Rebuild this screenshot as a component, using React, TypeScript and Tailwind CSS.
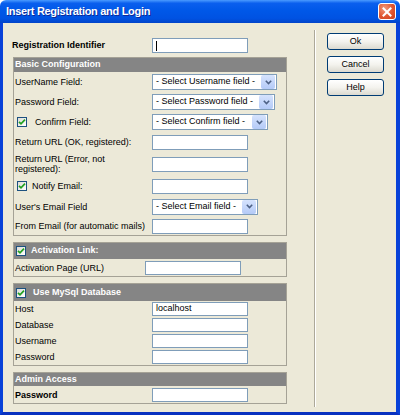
import React from 'react';

const Check: React.FC = () => (
  <div className="w-[10px] h-[10px] border border-[#1C5180] bg-gradient-to-br from-[#DCDCD7] to-white flex items-center justify-center shrink-0">
    <svg width="8" height="8" viewBox="0 0 8 8">
      <path d="M1 3.8 L3 5.8 L7 1.6" fill="none" stroke="#21A121" strokeWidth="1.7" />
    </svg>
  </div>
);

const TextBox: React.FC<{ w?: string; value?: string; caret?: boolean; h?: string }> = ({ w = 'w-[96px]', value, caret, h = 'h-[15px]' }) => (
  <div className={`${w} ${h} border border-[#7F9DB9] bg-white flex items-center px-[3px] text-black shrink-0`}>
    {caret && <div className="w-px h-[10px] bg-black" />}
    {value}
  </div>
);

const Combo: React.FC<{ w: string; label: string }> = ({ w, label }) => (
  <div className={`${w} h-[16px] border border-[#7F9DB9] bg-white flex items-center shrink-0`}>
    <div className="flex-1 pl-[3px] whitespace-nowrap overflow-hidden">{label}</div>
    <div className="w-[14px] h-[14px] mr-px bg-gradient-to-b from-[#D6E3FD] to-[#B4CAF7] rounded-[2px] flex items-center justify-center">
      <svg width="7" height="5" viewBox="0 0 7 5">
        <path d="M0.8 0.8 L3.5 3.5 L6.2 0.8" fill="none" stroke="#4D6185" strokeWidth="1.6" />
      </svg>
    </div>
  </div>
);

const Row: React.FC<{ h: string; label: React.ReactNode; lw?: string; children: React.ReactNode }> = ({ h, label, lw = 'w-[138px]', children }) => (
  <div className={`${h} flex items-center`}>
    <div className={`${lw} pl-px leading-[10px]`}>{label}</div>
    {children}
  </div>
);

const XpButton: React.FC<{ label: string }> = ({ label }) => (
  <div className="w-[57px] h-[17px] rounded-[3px] border border-[#003C74] bg-gradient-to-b from-white via-[#F4F3EE] to-[#DCDAD0] flex items-center justify-center text-black">
    {label}
  </div>
);

export default function App() {
  return (
    <div className="w-[400px] h-[415px] flex flex-col font-['Liberation_Sans',Arial,sans-serif] text-[9px] text-black bg-white">
      {/* title bar */}
      <div className="h-[23px] rounded-t-[6px] bg-[linear-gradient(to_bottom,#4a9bff_0%,#0a5fee_14%,#0058e8_45%,#0052e2_80%,#0244c9_100%)] flex items-center pl-[6px] pr-[4px]">
        <div className="flex-1 text-white font-bold text-[11px] tracking-[-0.3px] [text-shadow:1px_1px_0_#0c2a99]">Insert Registration and Login</div>
        <div className="w-[18px] h-[17px] rounded-[3px] border border-white bg-[radial-gradient(circle_at_35%_30%,#f09a7c_0%,#e0552f_55%,#c8401d_100%)] flex items-center justify-center">
          <svg width="10" height="10" viewBox="0 0 10 10">
            <path d="M1.5 1.5 L8.5 8.5 M8.5 1.5 L1.5 8.5" stroke="white" strokeWidth="2" strokeLinecap="square" />
          </svg>
        </div>
      </div>

      {/* client */}
      <div className="flex-1 flex bg-[#ECE9D8] border-l-[3px] border-r-[4px] border-b-[3px] border-l-[#0841D8] border-r-[#0841D8] border-b-[#0831C0]">
        {/* left */}
        <div className="w-[311px] pl-[10px] pt-[15px] flex flex-col">
          <div className="h-[15px] flex items-center -ml-px">
            <div className="w-[140px] font-bold">Registration Identifier</div>
            <TextBox caret />
          </div>

          {/* Basic configuration */}
          <div className="mt-[4px] w-[274px] border border-[#A5A296] flex flex-col">
            <div className="h-[14px] bg-[#858585] text-white font-bold flex items-center pl-px">Basic Configuration</div>
            <Row h="h-[20px]" label="UserName Field:"><Combo w="w-[125px]" label="- Select Username field -" /></Row>
            <Row h="h-[20px]" label="Password Field:"><Combo w="w-[123px]" label="- Select Password field -" /></Row>
            <Row h="h-[20px]" label={<div className="flex items-center pl-[2px]"><Check /><span className="ml-[8px]">Confirm Field:</span></div>}>
              <Combo w="w-[116px]" label="- Select Confirm field -" />
            </Row>
            <Row h="h-[20px]" label="Return URL (OK, registered):"><TextBox /></Row>
            <Row h="h-[24px]" label={<>Return URL (Error, not<br />registered):</>}><TextBox /></Row>
            <Row h="h-[20px]" label={<div className="flex items-center pl-[2px]"><Check /><span className="ml-[5px]">Notify Email:</span></div>}>
              <TextBox />
            </Row>
            <Row h="h-[21px]" label="User's Email Field"><Combo w="w-[106px]" label="- Select Email field -" /></Row>
            <Row h="h-[18px]" label="From Email (for automatic mails)"><TextBox /></Row>
          </div>

          {/* Activation */}
          <div className="mt-[6px] w-[274px] border border-[#A5A296] flex flex-col">
            <div className="h-[16px] bg-[#858585] text-white font-bold flex items-center pl-[2px]">
              <Check /><span className="ml-[5px]">Activation Link:</span>
            </div>
            <Row h="h-[17px]" lw="w-[131px]" label="Activation Page (URL)"><TextBox h="h-[14px]" /></Row>
          </div>

          {/* MySql */}
          <div className="mt-[6px] w-[274px] border border-[#A5A296] flex flex-col">
            <div className="h-[17px] bg-[#858585] text-white font-bold flex items-center pl-[2px]">
              <Check /><span className="ml-[7px]">Use MySql Database</span>
            </div>
            <Row h="h-[16px]" label="Host"><TextBox h="h-[14px]" value="localhost" /></Row>
            <Row h="h-[16px]" label="Database"><TextBox h="h-[14px]" /></Row>
            <Row h="h-[16px]" label="Username"><TextBox h="h-[14px]" /></Row>
            <Row h="h-[16px]" label="Password"><TextBox h="h-[14px]" /></Row>
          </div>

          {/* Admin */}
          <div className="mt-[6px] w-[274px] border border-[#A5A296] flex flex-col">
            <div className="h-[13px] bg-[#858585] text-white font-bold flex items-center pl-px">Admin Access</div>
            <Row h="h-[17px]" label={<span className="font-bold">Password</span>}><TextBox h="h-[14px]" /></Row>
          </div>
        </div>

        {/* separator */}
        <div className="w-[2px] mt-[7px] mb-[5px] border-l border-l-[#ACA899] border-r border-r-white" />

        {/* buttons */}
        <div className="pl-[11px] pt-[10px] flex flex-col gap-[6px]">
          <XpButton label="Ok" />
          <XpButton label="Cancel" />
          <XpButton label="Help" />
        </div>
      </div>
    </div>
  );
}
